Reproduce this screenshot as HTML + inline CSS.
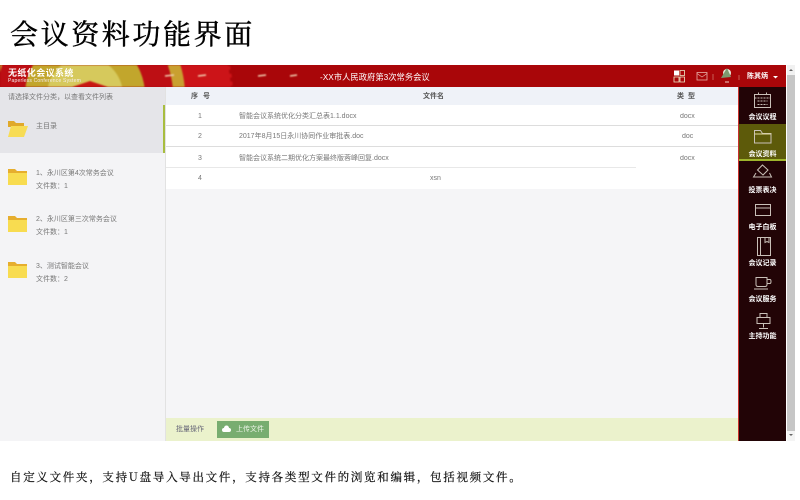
<!DOCTYPE html>
<html lang="zh"><head><meta charset="utf-8"><title>会议资料功能界面</title>
<style>
html,body{margin:0;padding:0;background:#fff}
#p{position:relative;width:800px;height:500px;overflow:hidden;background:#fff;font-family:"Liberation Sans","Noto Sans CJK SC",sans-serif}
#p div,#p svg{position:absolute}
.t{white-space:nowrap;filter:blur(.35px)}
.g{font-size:7px;color:#777;line-height:10px}
.s{font-size:7px;color:#fff;font-weight:700;width:47px;text-align:center;left:739px;line-height:10px}
.r{left:166px;width:572px;height:21px;background:#fff;border-bottom:1px solid #ddd;box-sizing:border-box}
.fs{stroke:#c9c0b8;fill:none;stroke-width:1}
</style></head><body><div id="p">
<div class="t" style="left:10px;top:13px;font:400 28px/40px 'Noto Serif CJK SC',serif;letter-spacing:2.6px;color:#000;-webkit-text-stroke:.45px #000">会议资料功能界面</div>

<div style="left:0;top:65px;width:786px;height:22px;background:#a90609;overflow:hidden">
<svg style="left:0;top:0;filter:blur(.8px)" width="320" height="22" viewBox="0 0 320 22">
<circle cx="85" cy="30" r="148" fill="#cc1418"/>
<circle cx="85" cy="30" r="148" fill="none" stroke="#a90609" stroke-width="4" stroke-dasharray="4 4"/>
<circle cx="85" cy="30" r="100" fill="#c9a030"/>
<circle cx="85" cy="30" r="88" fill="#bd0f14"/>
<circle cx="85" cy="30" r="60" fill="#c2a62c"/>
<circle cx="85" cy="30" r="38" fill="#d6c95c"/>
<path d="M72 22l18-6 18 6z" fill="#c81813"/>
<path d="M165 11l9-1M198 11l8-1M258 11l8-1M290 11l7-1" stroke="#f2d0b0" stroke-width="1.400"/>
</svg></div>
<div class="t" style="left:8px;top:68px;font-size:9px;line-height:11px;font-weight:700;color:#fff;letter-spacing:.4px">无纸化会议系统</div>
<div class="t" style="left:8px;top:78px;font-size:5px;line-height:6px;color:#f5eeee;letter-spacing:.2px">Paperless Conference System</div>
<div class="t" style="left:320px;top:72px;font-size:8.300px;line-height:11px;color:#fff">-XX市人民政府第3次常务会议</div>
<svg style="left:672px;top:65px" width="114" height="22" viewBox="0 0 114 22" fill="none">
<path d="M2 5.500h5v5h-5z" fill="#fff"/><path d="M8 5.500h4.500v5h-4.500zM2 12h5v5h-5zM8 12h4.500v5h-4.500z" stroke="#eec" stroke-width=".8"/>
<rect x="25" y="7.500" width="10" height="7.500" stroke="#e8b0a8" stroke-width=".8"/><path d="M25 8.500l5 3.500 5-3.500" stroke="#e8b0a8" stroke-width=".7"/>
<path d="M41 9v6M67 10v5" stroke="#d98" stroke-width=".6"/>
<circle cx="55" cy="8" r="4" fill="#e8eedd"/><path d="M49 13l6-10 4 9z" fill="#7d9a70"/><path d="M53 17h4" stroke="#f3d0c8"/>
<path d="M101 11h5l-2.500 2.500z" fill="#fff"/></svg>
<div class="t" style="left:747px;top:72px;font-size:7px;line-height:10px;font-weight:700;color:#fff">陈其炳</div>

<div style="left:787px;top:65px;width:8px;height:376px;background:#c6c6c6"></div>
<div style="left:787px;top:65px;width:8px;height:10px;background:#f1f1f1"></div>
<div style="left:787px;top:431px;width:8px;height:10px;background:#f4f4f4"></div>
<svg style="left:787px;top:65px" width="8" height="376" viewBox="0 0 8 376"><path d="M2 6l2-2 2 2zM2 369l2 2 2-2z" fill="#666"/></svg>

<div style="left:0;top:87px;width:165px;height:354px;background:#f4f4f6"></div>
<div style="left:165px;top:87px;width:1px;height:354px;background:#e2e2e2"></div>
<div style="left:0;top:87px;width:165px;height:66px;background:#e5e5e9"></div>
<div style="left:163px;top:105px;width:2px;height:48px;background:#a8bd3f"></div>
<div class="t g" style="left:8px;top:93px">请选择文件分类，以查看文件列表</div>

<svg style="left:7px;top:119px" width="21" height="20" viewBox="0 0 21 20"><path d="M1 2h6l2 2h8v4H1z" fill="#e0a92a"/><path d="M4 7h17l-4 11H1z" fill="#f7dc55"/></svg>
<svg style="left:7px;top:168px" width="21" height="18" viewBox="0 0 21 18"><path d="M1 1h7l2 2h10v4H1z" fill="#e6ae2e"/><path d="M1 5h19v12H1z" fill="#f8dc50"/></svg>
<svg style="left:7px;top:215px" width="21" height="18" viewBox="0 0 21 18"><path d="M1 1h7l2 2h10v4H1z" fill="#e6ae2e"/><path d="M1 5h19v12H1z" fill="#f8dc50"/></svg>
<svg style="left:7px;top:261px" width="21" height="18" viewBox="0 0 21 18"><path d="M1 1h7l2 2h10v4H1z" fill="#e6ae2e"/><path d="M1 5h19v12H1z" fill="#f8dc50"/></svg>
<div class="t g" style="left:36px;top:122px">主目录</div>
<div class="t g" style="left:36px;top:169px">1、永川区第4次常务会议</div>
<div class="t g" style="left:36px;top:182px">文件数：1</div>
<div class="t g" style="left:36px;top:215px">2、永川区第三次常务会议</div>
<div class="t g" style="left:36px;top:228px">文件数：1</div>
<div class="t g" style="left:36px;top:262px">3、测试智能会议</div>
<div class="t g" style="left:36px;top:275px">文件数：2</div>

<div style="left:166px;top:87px;width:573px;height:354px;background:#f5f5f7"></div>
<div style="left:166px;top:87px;width:573px;height:18px;background:#eff2f8"></div>
<div class="t" style="left:191px;top:92px;font-size:7px;line-height:10px;font-weight:700;color:#555;letter-spacing:1.500px">序 号</div>
<div class="t" style="left:423px;top:92px;font-size:7px;line-height:10px;font-weight:700;color:#555">文件名</div>
<div class="t" style="left:677px;top:92px;font-size:7px;line-height:10px;font-weight:700;color:#555;letter-spacing:1px">类 型</div>

<div class="r" style="top:105px"></div><div class="r" style="top:126px"></div>
<div class="r" style="top:147px;border:0"></div><div class="r" style="top:168px;border:0"></div>
<div style="left:166px;top:167px;width:470px;height:1px;background:#e8e8e8"></div>
<div class="t g" style="left:198px;top:112px">1</div><div class="t g" style="left:198px;top:132px">2</div><div class="t g" style="left:198px;top:154px">3</div><div class="t g" style="left:198px;top:174px">4</div>
<div class="t g" style="left:239px;top:112px">智能会议系统优化分类汇总表1.1.docx</div>
<div class="t g" style="left:239px;top:132px">2017年8月15日永川协同作业审批表.doc</div>
<div class="t g" style="left:239px;top:154px">智能会议系统二期优化方案最终版蓉峰回复.docx</div>
<div class="t g" style="left:430px;top:174px">xsn</div>
<div class="t g" style="left:680px;top:112px">docx</div><div class="t g" style="left:682px;top:132px">doc</div><div class="t g" style="left:680px;top:154px">docx</div>

<div style="left:166px;top:418px;width:573px;height:23px;background:#ebf2cc"></div>
<div class="t g" style="left:176px;top:425px;color:#667">批量操作</div>
<div style="left:217px;top:421px;width:52px;height:17px;background:#78ad70"></div>
<svg style="left:222px;top:425px" width="9" height="8" viewBox="0 0 9 8"><path d="M2 7a2 2 0 0 1 0-4 2.500 2.500 0 0 1 5 0 2 2 0 0 1 0 4z" fill="#fff"/></svg>
<div class="t" style="left:236px;top:425px;font-size:7px;line-height:10px;color:#eef5e8">上传文件</div>

<div style="left:738px;top:87px;width:1px;height:354px;background:#c9302c"></div>
<div style="left:739px;top:87px;width:47px;height:354px;background:#220406"></div>
<div style="left:739px;top:124px;width:47px;height:36px;background:#5d5a0a"></div>
<div style="left:739px;top:159px;width:47px;height:1.500px;background:#9fb52c"></div>
<svg style="left:739px;top:87px" width="47" height="260" viewBox="0 0 47 260">
<g class="fs"><rect x="15.500" y="7.500" width="16" height="13"/><path d="M15.500 11h16M19.500 5.500v3M27.500 5.500v3M18.500 14h10M18.500 17.500h10" stroke-dasharray="2 1"/></g>
<path class="fs" d="M15.500 43.500h6l2 3h8.500v9.500h-16.500z" stroke="#e2dca0"/><path d="M15.500 47h16.500" stroke="#e2dca0" fill="none"/>
<path class="fs" d="M23.500 78l5.500 5-5 5-5.500-5zM17 86l-2.500 4h18l-2-4"/>
<g class="fs"><rect x="16.500" y="117.500" width="15" height="11"/><path d="M16.500 121h15"/></g>
<g class="fs"><rect x="18.500" y="150.500" width="13" height="18"/><path d="M21.500 150.500v18M26 150.500v5l2-1 2 1v-5"/></g>
<path class="fs" d="M17 190.500h11v7q0 2-2 2h-7q-2 0-2-2zM28 192.500h3q1 0 1 2t-1 2h-3M15 202h14"/>
<path class="fs" d="M18 230.500h13v6H18zM24.500 236.500v4M20 241.500h9M21 230.500v-4h7v4"/>
</svg>
<div class="t s" style="top:113px">会议议程</div>
<div class="t s" style="top:150px">会议资料</div>
<div class="t s" style="top:186px">投票表决</div>
<div class="t s" style="top:223px">电子白板</div>
<div class="t s" style="top:259px">会议记录</div>
<div class="t s" style="top:295px">会议服务</div>
<div class="t s" style="top:332px">主持功能</div>

<div class="t" style="left:10px;top:469px;font:400 11.500px/16px 'Noto Serif CJK SC',serif;letter-spacing:1.700px;color:#111;-webkit-text-stroke:.2px #111">自定义文件夹，支持U盘导入导出文件，支持各类型文件的浏览和编辑，包括视频文件。</div>
</div></body></html>
